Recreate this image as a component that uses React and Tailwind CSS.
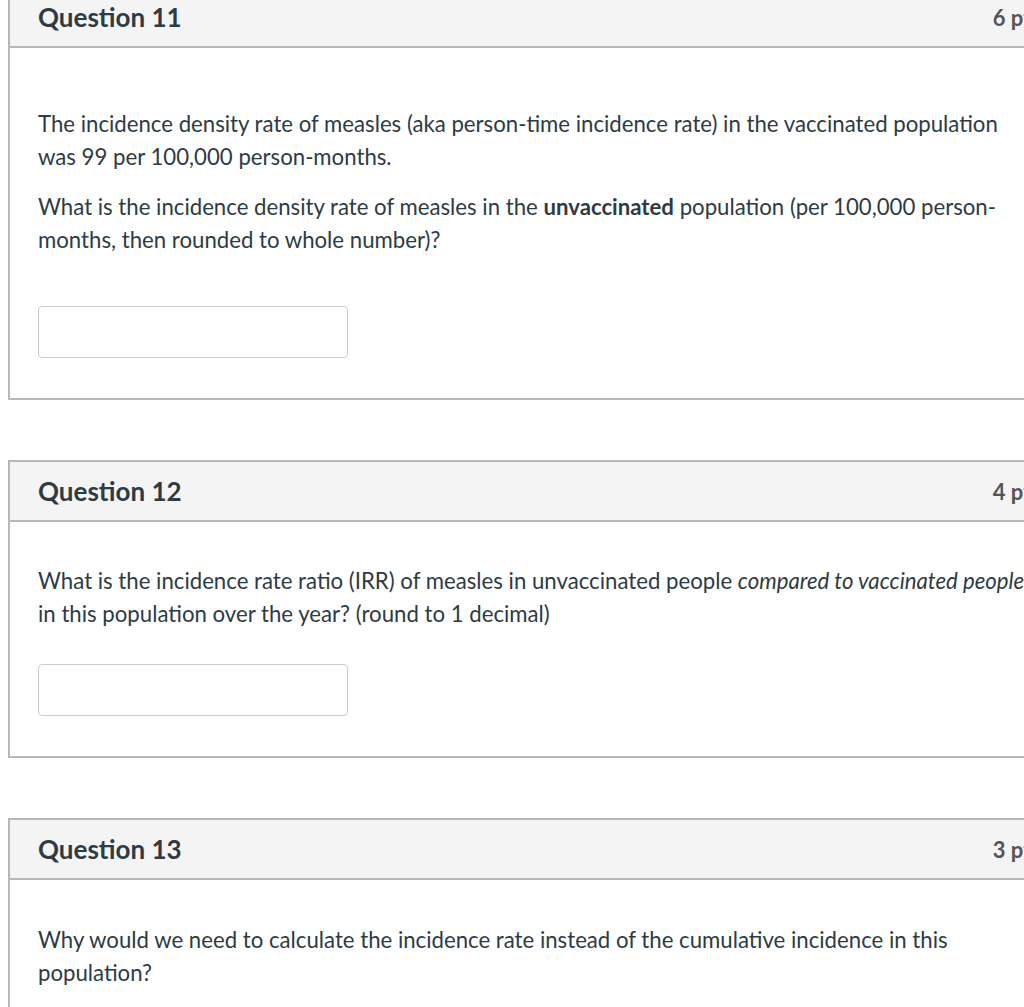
import React from 'react';

const questions = [
  {
    title: 'Question 11',
    points: '6 pts',
    pad: 'pt-[59px]',
    gap: 'mt-[50px]',
    body: (
      <>
        <p className="mb-[17px]">
          The incidence density rate of measles (aka person-time incidence rate) in the vaccinated population was 99 per 100,000 person-months.
        </p>
        <p>
          What is the incidence density rate of measles in the <strong className="font-bold">unvaccinated</strong> population (per 100,000 person-months, then rounded to whole number)?
        </p>
      </>
    ),
    input: true,
  },
  {
    title: 'Question 12',
    points: '4 pts',
    pad: 'pt-[42px]',
    gap: 'mt-[34px]',
    body: (
      <p>
        What is the incidence rate ratio (IRR) of measles in unvaccinated people <em className="italic">compared to vaccinated people</em> in this population over the year? (round to 1 decimal)
      </p>
    ),
    input: true,
  },
  {
    title: 'Question 13',
    points: '3 pts',
    pad: 'pt-[43px]',
    gap: 'mt-[34px]',
    body: (
      <p>
        Why would we need to calculate the incidence rate instead of the cumulative incidence in this population?
      </p>
    ),
    input: false,
  },
];

function QuestionCard({ q }) {
  return (
    <div className="ml-[8px] w-[1064px] border-2 border-[#b7b7b7] bg-white mb-[60px]">
      <div className="h-[60px] bg-[#f4f4f4] border-b-2 border-[#b7b7b7] flex items-center justify-between pl-[28px] pr-[29px]">
        <h2 className="text-[26px] font-bold text-[#2d3b45]">{q.title}</h2>
        <div className="text-[22px] font-bold text-[#555555]">{q.points}</div>
      </div>
      <div className={`pl-[28px] pr-[30px] pb-[40px] ${q.pad} text-[22.2px] leading-[33px] text-[#2d3b45]`}>
        {q.body}
        {q.input && (
          <input
            type="text"
            className={`${q.gap} block w-[310px] h-[52px] border border-[#cccccc] rounded-[4px] bg-white`}
          />
        )}
      </div>
    </div>
  );
}

export default function App() {
  return (
    <div
      className="w-[1024px] h-[1007px] overflow-hidden bg-white"
      style={{ fontFamily: 'Lato, "Noto Sans", sans-serif' }}
    >
      <div className="-mt-[14px]">
        {questions.map((q) => (
          <QuestionCard key={q.title} q={q} />
        ))}
      </div>
    </div>
  );
}
